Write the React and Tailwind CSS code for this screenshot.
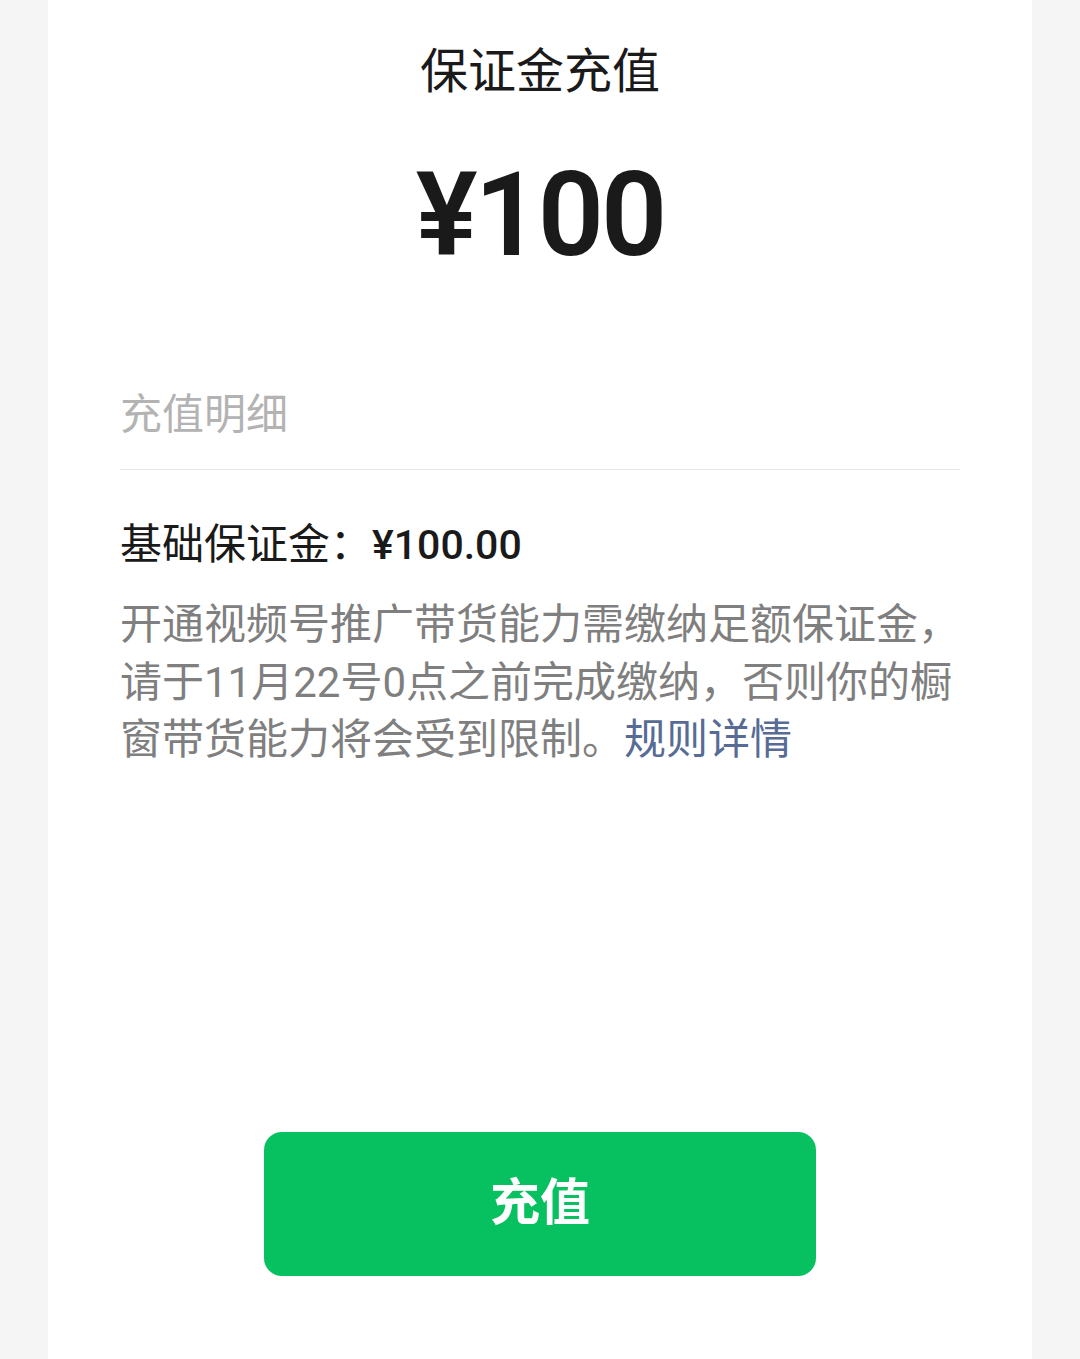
export default function App() {
  const font = { fontFamily: "Roboto, 'Noto Sans CJK SC', sans-serif" };
  return (
    <div className="min-h-[1359px] w-full bg-[#f5f5f5]" style={font}>
      <div className="mx-[48px] min-h-[1359px] bg-white px-[72px] flex flex-col">
        {/* Header */}
        <h1 className="pt-[40px] text-center text-[48px] leading-[64px] font-normal text-[#1a1a1a]">
          保证金充值
        </h1>
        <div className="mt-[51px] text-center text-[116px] leading-[120px] font-semibold tracking-[-3px] text-[#1a1a1a]">
          ¥100
        </div>

        {/* Detail */}
        <div className="mt-[112px] border-b border-[#e6e6e6] pb-[26px]">
          <span className="text-[42px] leading-[56px] text-[#b3b3b3]">充值明细</span>
        </div>

        <div className="mt-[47px] text-[42px] leading-[56px] text-[#1a1a1a]">
          基础保证金：<span className="text-[41px] font-medium">¥100.00</span>
        </div>

        <div className="mt-[23px] text-[42px] leading-[57.5px] text-[#7f7f7f] whitespace-nowrap">
          <div>开通视频号推广带货能力需缴纳足额保证金，</div>
          <div>请于11月22号0点之前完成缴纳，否则你的橱</div>
          <div>
            窗带货能力将会受到限制。<span className="text-[#576b95]">规则详情</span>
          </div>
        </div>

        {/* Action */}
        <div className="mt-[363px] flex justify-center">
          <button className="h-[144px] w-[552px] rounded-[18px] bg-[#07c160] text-[50px] font-bold text-white">
            充值
          </button>
        </div>
      </div>
    </div>
  );
}
